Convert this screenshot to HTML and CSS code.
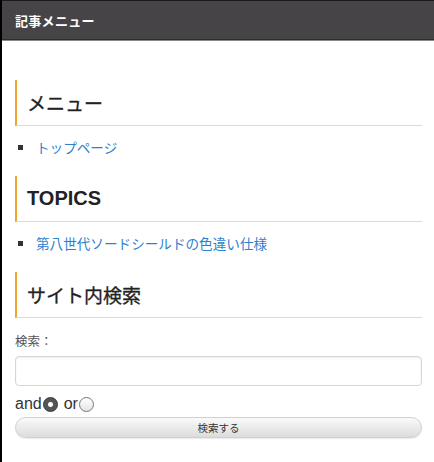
FILE: index.html
```html
<!DOCTYPE html>
<html lang="ja">
<head>
<meta charset="utf-8">
<link rel="stylesheet" href="styles.css">
</head>
<body>
<div class="frame">
  <header class="bar"><span class="bar-title">記事メニュー</span></header>
  <main class="content">
    <section class="block">
      <h2 class="heading">メニュー</h2>
      <ul class="list"><li><a href="#">トップページ</a></li></ul>
    </section>
    <section class="block">
      <h2 class="heading latin">TOPICS</h2>
      <ul class="list"><li><a href="#">第八世代ソードシールドの色違い仕様</a></li></ul>
    </section>
    <section class="block">
      <h2 class="heading">サイト内検索</h2>
      <form class="search">
        <label class="label">検索：</label>
        <input class="field" type="text">
        <div class="radios">
          <span>and</span><span class="radio on"></span>
          <span class="or">or</span><span class="radio"></span>
        </div>
        <button class="btn" type="button">検索する</button>
      </form>
    </section>
  </main>
</div>
</body>
</html>
```

FILE: styles.css
```css
html, body { margin: 0; padding: 0; background: #fff; }
body { font-family: "Noto Sans CJK JP", "Noto Sans", sans-serif; }
.frame { border-left: 2px solid #000; min-height: 462px; box-sizing: border-box; background: #fff; }
.bar { height: 38px; background: #464446; border-top: 1px solid #1a1a1a; border-bottom: 1px solid #2e2d2e; box-shadow: 0 1px 0 #8a8a8a; display: flex; align-items: center; padding-left: 13px; }
.bar-title { color: #fff; font-size: 13px; font-weight: bold; letter-spacing: 0.3px; }
.content { padding: 40px 12px 0 13px; }
.heading { margin: 0; border-left: 2px solid #f0a530; border-bottom: 1px solid #dadada; height: 45px; box-sizing: content-box; display: flex; align-items: center; padding-left: 10px; font-size: 19px; font-weight: normal; color: #222; -webkit-text-stroke: 0.3px #222; }
.heading.latin { font-family: "Liberation Sans", Arial, sans-serif; font-size: 20px; font-weight: bold; -webkit-text-stroke: 0; }
.list { margin: 0; padding: 11px 0 0; list-style: none; height: 39px; }
.list li { display: flex; align-items: center; font-size: 13.6px; height: 20px; }
.list li::before { content: ""; width: 5px; height: 5px; background: #333; margin: 0 13px 0 3px; }
.list a { color: #2f7fcf; text-decoration: none; }
.search { display: flex; flex-direction: column; padding-top: 13px; }
.label { font-size: 12.5px; color: #555; height: 20px; line-height: 20px; }
.field { margin-top: 5px; height: 30px; box-sizing: border-box; border: 1px solid #d6d6d6; border-radius: 4px; background: #fff; box-shadow: inset 0 1px 2px rgba(0,0,0,0.08); padding: 0; }
.radios { display: flex; align-items: center; height: 18px; margin-top: 9px; font-family: "Liberation Sans", Arial, sans-serif; font-size: 16px; color: #333; }
.radio { width: 15px; height: 15px; border-radius: 50%; box-sizing: border-box; border: 1px solid #777; background: linear-gradient(#fff, #e4e4e4); margin-left: 1px; }
.radio.on { background: radial-gradient(circle, #fff 0 2px, #555 3px); border: 1px solid #333; }
.or { margin-left: 6px; }
.btn { margin-top: 4px; height: 21px; border: 1px solid #d0d0d0; border-radius: 11px; background: linear-gradient(#fafafa, #dcdcdc); font-family: "Noto Sans CJK JP", sans-serif; font-size: 10.5px; color: #333; padding: 0; box-shadow: 0 1px 1px rgba(0,0,0,0.08); }
```
